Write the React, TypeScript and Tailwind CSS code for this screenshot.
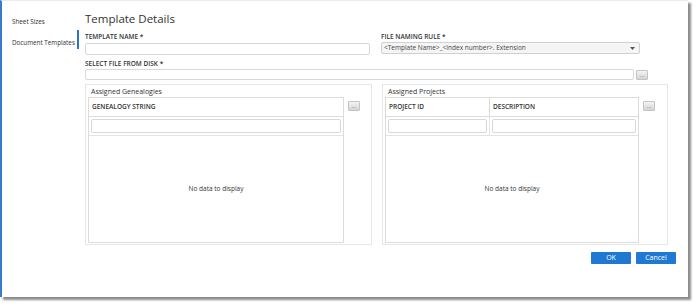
import React from "react";

const font = { fontFamily: '"Open Sans", "Noto Sans", sans-serif' };

function DotsButton({ className = "" }: { className?: string }) {
  return (
    <div
      className={`w-[12px] h-[10px] rounded-[1px] border border-[#c4c4c4] bg-gradient-to-b from-[#f4f4f4] to-[#d4d4d4] flex items-center justify-center text-[6px] leading-none text-[#777] ${className}`}
    >
      ...
    </div>
  );
}

function Panel({
  title,
  width,
  tableWidth,
  columns,
}: {
  title: string;
  width: number;
  tableWidth: number;
  columns: { label: string; w?: number }[];
}) {
  return (
    <div
      className="h-[161px] border border-[#e6e6e6] flex flex-col pl-[2px] pr-[4px]"
      style={{ width }}
    >
      <div className="h-[12px] pl-[3px] pt-[1px] text-[7px] leading-[12px] text-[#333]">{title}</div>
      <div className="flex gap-[4px] flex-1 pb-[1px]">
        <div className="border border-[#dcdcdc] flex flex-col h-full" style={{ width: tableWidth }}>
          <div className="flex h-[19px] border-b border-[#dcdcdc]">
            {columns.map((c, i) => (
              <div
                key={i}
                className={`flex items-center pl-[3px] text-[6.5px] font-semibold text-[#333] ${i > 0 ? "border-l border-[#dcdcdc] flex-1" : ""}`}
                style={c.w ? { width: c.w } : { flex: 1 }}
              >
                {c.label}
              </div>
            ))}
          </div>
          <div className="flex h-[19px] border-b border-[#e4e4e4]">
            {columns.map((c, i) => (
              <div
                key={i}
                className={`flex items-center px-[2px] ${i > 0 ? "border-l border-[#e4e4e4]" : ""}`}
                style={c.w ? { width: c.w } : { flex: 1 }}
              >
                <div className="w-full h-[14px] border border-[#d8d8d8] rounded-[2px] bg-white" />
              </div>
            ))}
          </div>
          <div className="flex-1 flex items-center justify-center text-[6.5px] text-[#333]">
            No data to display
          </div>
        </div>
        <DotsButton className="mt-[4px]" />
      </div>
    </div>
  );
}

export default function App() {
  return (
    <div className="w-[698px] h-[307px] bg-white" style={font}>
      <div className="w-[688px] h-[297px] bg-white border-l-2 border-[#3a7bc8] border-t border-t-[#ececec] shadow-[3px_3px_2px_rgba(0,0,0,0.45)] flex">
        {/* Sidebar */}
        <div className="w-[75px] pl-[10px] pt-[15px] flex flex-col text-[6.3px] text-[#333] whitespace-nowrap">
          <div className="h-[11px] leading-[11px]">Sheet Sizes</div>
          <div className="h-[11px] leading-[11px] mt-[10px]">Document Templates</div>
        </div>
        <div className="w-[3px] pt-[29px]">
          <div className="w-[2px] h-[19px] bg-[#2e73c3]" />
        </div>
        {/* Main */}
        <div className="pl-[5px] pt-[10px] flex flex-col">
          <div className="text-[11.5px] leading-[15px] text-[#333]">Template Details</div>
          <div className="flex mt-[6px]">
            <div className="w-[285px] flex flex-col">
              <div className="text-[6.5px] font-semibold text-[#333] leading-[9px]">TEMPLATE NAME *</div>
              <div className="h-[12px] mt-[2px] border border-[#d8d8d8] rounded-[2px] bg-white" />
            </div>
            <div className="w-[259px] ml-[11px] flex flex-col">
              <div className="text-[6.5px] font-semibold text-[#333] leading-[9px]">FILE NAMING RULE *</div>
              <div className="h-[12px] mt-[1px] border border-[#d0d0d0] rounded-[2px] bg-[#f5f5f5] flex items-center justify-between pl-[2px] pr-[4px]">
                <span className="text-[6.5px] text-[#444] leading-none">&lt;Template Name&gt;_&lt;Index number&gt;. Extension</span>
                <svg width="5" height="3" viewBox="0 0 5 3">
                  <path d="M0 0 L5 0 L2.5 3 Z" fill="#555" />
                </svg>
              </div>
            </div>
          </div>
          <div className="mt-[4px] text-[6.5px] font-semibold text-[#333] leading-[9px]">SELECT FILE FROM DISK *</div>
          <div className="flex items-center gap-[2px] mt-[1px]">
            <div className="w-[549px] h-[11px] border border-[#d8d8d8] rounded-[2px] bg-white" />
            <DotsButton />
          </div>
          <div className="flex gap-[10px] mt-[4px]">
            <Panel title="Assigned Genealogies" width={287} tableWidth={256} columns={[{ label: "GENEALOGY STRING" }]} />
            <Panel
              title="Assigned Projects"
              width={286}
              tableWidth={254}
              columns={[{ label: "PROJECT ID", w: 103 }, { label: "DESCRIPTION" }]}
            />
          </div>
          <div className="flex justify-end gap-[5px] mt-[7px] w-[591px]">
            <div className="w-[40px] h-[12px] bg-[#1f78d1] rounded-[1px] flex items-center justify-center text-[7px] text-white">OK</div>
            <div className="w-[40px] h-[12px] bg-[#1f78d1] rounded-[1px] flex items-center justify-center text-[7px] text-white">Cancel</div>
          </div>
        </div>
      </div>
    </div>
  );
}
